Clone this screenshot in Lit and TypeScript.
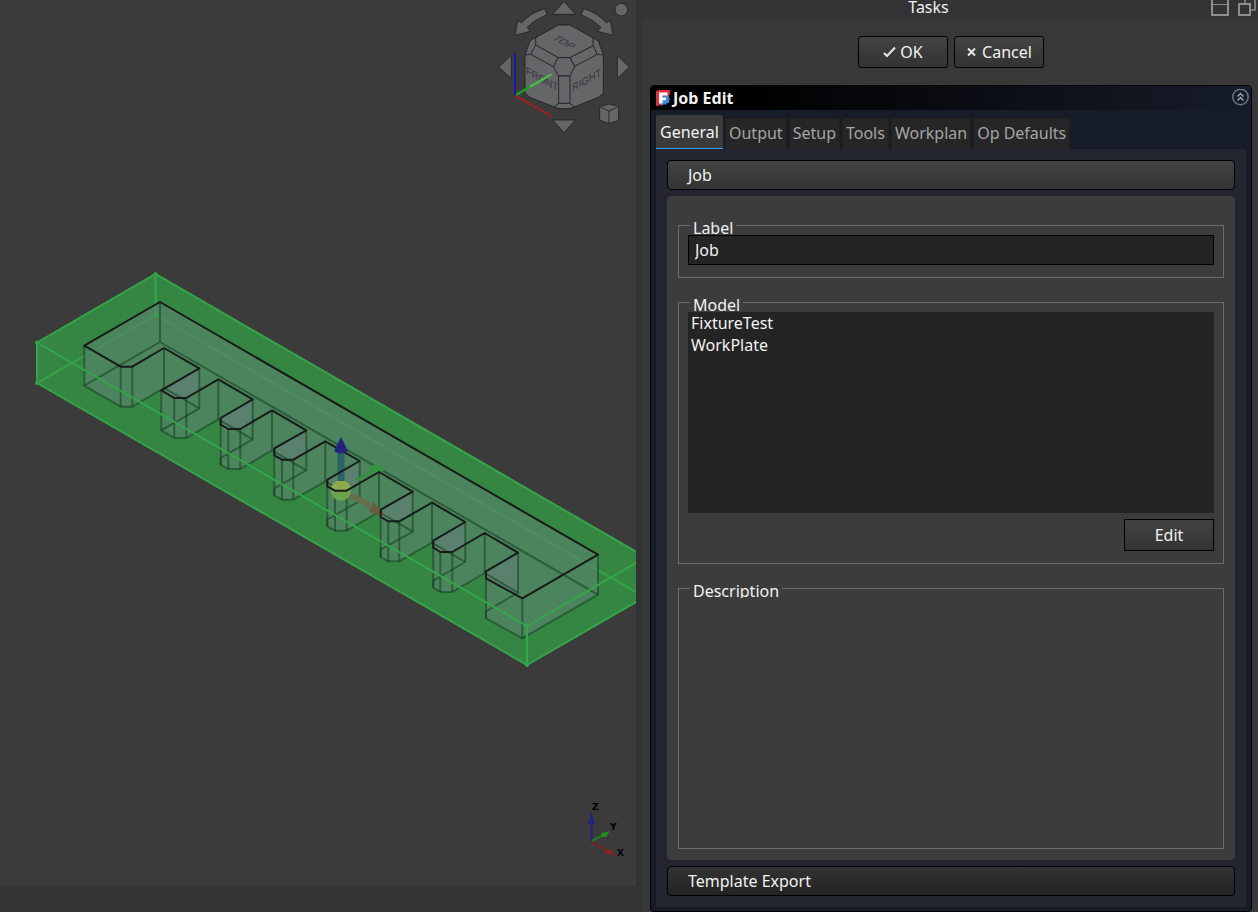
import { LitElement, html, svg, css } from "lit";
import { customElement, state } from "lit/decorators.js";

type Point = [number, number];

const DEPTH = 40;

/* Top outline of the fixture, clockwise from its left corner. */
const outline: Point[] = [
  [84.3, 345.7], [160, 302], [598, 554.7], [522.3, 598.3], [486, 578.3], [486, 571.3],
  [518, 552.7], [484.7, 533],
  [452.3, 552], [440.3, 552], [433.3, 547.7], [433.3, 540.7], [465.3, 522], [432, 502.7],
  [399.3, 521.3], [388.3, 521.3], [380.7, 517], [380.7, 509.7], [412.7, 491.7], [379, 472],
  [346.7, 490.7], [335, 490.7], [327.3, 486.3], [327.3, 479.7], [359.7, 461], [325.3, 441.3],
  [293.3, 459.7], [282, 459.7], [274.3, 455.3], [274.3, 448.3], [306.3, 430.3], [272, 410.3],
  [240.3, 429], [228.3, 429], [220.7, 424.7], [220.7, 418], [252.7, 399.3], [218.3, 379.3],
  [186.3, 398], [174.3, 398], [161.3, 390.3], [199.3, 368.3], [164, 348],
  [132.3, 366.7], [120.7, 366.7],
];

const path = (pts: Point[], dy = 0) =>
  "M" + pts.map(([x, y]) => `${x} ${y + dy}`).join("L") + "Z";

const wall = (i: number) => {
  const [ax, ay] = outline[i];
  const [bx, by] = outline[(i + 1) % outline.length];
  return `M${ax} ${ay}L${bx} ${by}V${by + DEPTH}L${ax} ${ay + DEPTH}Z`;
};

/* Notch walls that are seen from behind through the top face. */
const backWalls = outline
  .map((_, i) => i)
  .filter((i) => {
    const [ax, ay] = outline[i];
    const [bx, by] = outline[(i + 1) % outline.length];
    return i > 3 && bx - ax > 25 && by < ay;
  });

@customElement("model-scene")
export class ModelScene extends LitElement {
  static styles = css`
    :host { display: block; height: 100%; }
    svg { display: block; width: 100%; height: 100%; }
    .body { fill: #5b836f; opacity: 0.6; }
    .behind { fill: #6a7f80; opacity: 0.45; }
    .soft { fill: none; stroke: #123c1d; stroke-opacity: 0.52; stroke-width: 2; stroke-linejoin: round; }
    .edge { fill: none; stroke: #171b19; stroke-width: 2; stroke-linejoin: round; }
    .stock { fill: #368643; }
    .wire { fill: none; stroke: #35a549; stroke-width: 2; stroke-linecap: round; }
    .dot { fill: #35a549; }
  `;

  render() {
    return html`
      <svg viewBox="0 0 636 886" preserveAspectRatio="xMidYMid slice" role="img" aria-label="Fixture inside its stock">
        <defs><clipPath id="top"><path d=${path(outline)} /></clipPath></defs>
        <path class="stock" d="M37 342.500L155.500 274L636 551.500L700 589V566L527 665L37 383Z" />
        <path class="wire" d="M155.500 274V315L37 383M155.500 315L700 629" />
        <g class="body">
          <path d=${path(outline)} />
          <path d=${path(outline, DEPTH)} />
          ${outline.map((_, i) => svg`<path d=${wall(i)} />`)}
        </g>
        <g clip-path="url(#top)">
          ${backWalls.map((i) => svg`<path class="behind" d=${wall(i)} />`)}
        </g>
        <path class="soft" d=${path(outline, DEPTH)} />
        <path class="soft" d=${outline.map(([x, y]) => `M${x} ${y}v${DEPTH}`).join("")} />
        <g>
          <path d="M355 479L370 471L369 466L378 464L385 467L382 473L374 472L357 482Z" fill="#369142" />
          <path d="M350 492L371 503L370 509L348 497Z" fill="#67704a" />
          <path d="M373 502L379 508L385 515L378 515L369 512Z" fill="#665d3a" />
          <circle cx="341" cy="490.500" r="10.200" fill="#6ba54b" />
          <path d="M330.800 490.500A10.200 10.200 0 0 1 351.200 490.500Z" fill="#8daa4d" />
          <rect x="337.500" y="451" width="7" height="30" fill="#2b6266" />
        </g>
        <path class="edge" d=${path(outline)} />
        <path d="M341 437L348 451Q341 456 334 451Z" fill="#22237f" />
        <path
          class="wire"
          d="M37 342.500L155.500 274L700 588.500M37 342.500V383L527 665V626L37 342.500M527 626L700 526M527 665L700 565"
        />
        ${[[37, 342.5], [37, 383], [155.5, 274], [155.5, 315], [527, 626], [527, 665]].map(
          ([x, y]) => svg`<circle class="dot" cx=${x} cy=${y} r="2" />`
        )}
      </svg>
    `;
  }
}

@customElement("nav-cube")
export class NavCube extends LitElement {
  static styles = css`
    :host { display: block; }
    svg { display: block; width: 100%; height: 100%; }
    .face { fill: #656668; stroke: #26272a; stroke-width: 3; stroke-linejoin: round; }
    .name { font: 32px "Liberation Sans", Arial, sans-serif; fill: #34363a; text-anchor: middle; }
  `;

  render() {
    return html`
      <svg viewBox="0 0 438 420" role="img" aria-label="Navigation cube">
        <g class="face">
          <path d="M222 4L256 43H188Z" />
          <path d="M222 398L256 360H188Z" />
          <path d="M26 201L64 166V236Z" />
          <path d="M418 201L382 166V236Z" />
          <circle cx="394" cy="29" r="19" />
          <path d="M164 26L172 44Q135 58 112 82L121 94L75 106L83 62L95 68Q122 38 164 26Z" />
          <path d="M281 26L273 44Q309 58 333 82L322 94L369 106L361 62L349 68Q322 38 281 26Z" />
          <path d="M205 75H240L308 113L325 123L340 165V280L325 292L240 326H205L120 292L105 280V165L120 123L136 113Z" />
          <path d="M205 75H240L308 113L310 137L240 173H205L137 135V113Z" />
          <path d="M137 135L205 173L190 200L122 163Z" />
          <path d="M310 137L240 173L254 199L322 163Z" />
          <path d="M205 173H240L254 199L240 228H206L190 200Z" />
          <path d="M206 228H240V310H206Z" />
          <path d="M193 320L206 310H240L252 320L240 326H205Z" />
          <path d="M122 163L105 165M322 163L340 165" />
          <path d="M329 320L356 312L386 319V361L357 371L329 360Z" />
          <path d="M329 320L357 333L386 319M357 333V371" />
        </g>
        <text class="name" transform="matrix(0.87 0.48 -0.87 0.5 213 132)">TOP</text>
        <text class="name" transform="matrix(0.87 0.48 0 1 156 248)">FRONT</text>
        <text class="name" transform="matrix(0.87 -0.48 0 1 290 251)">RIGHT</text>
        <path d="M77 288L184 348" stroke="#b01919" stroke-width="6" />
        <path d="M75 160V284" stroke="#1919b0" stroke-width="6" />
        <path d="M79 284L130 254" stroke="#19a519" stroke-width="7" />
        <path d="M120 260L185 223" stroke="#4dbb50" stroke-width="7" />
      </svg>
    `;
  }
}

@customElement("axis-cross")
export class AxisCross extends LitElement {
  static styles = css`
    :host { display: block; }
    svg { display: block; width: 100%; height: 100%; }
    text { font: bold 9px "DejaVu Sans", sans-serif; fill: #000; }
  `;

  render() {
    return html`
      <svg viewBox="0 0 50 66" role="img" aria-label="Axis cross">
        <path d="M11.500 21V42" stroke="#22237f" stroke-width="2" />
        <path d="M11.500 12L15 24H8Z" fill="#22237f" />
        <path d="M12 41L23 35" stroke="#227a22" stroke-width="2" />
        <path d="M21 33L30 31L26 37L22 37Z" fill="#228a22" />
        <path d="M12 42L28 51" stroke="#7d2222" stroke-width="2" />
        <path d="M28 48L37 56L24 53Z" fill="#8a2222" />
        <text x="12" y="10">Z</text>
        <text x="30" y="30">Y</text>
        <text x="37" y="56">X</text>
      </svg>
    `;
  }
}

@customElement("app-root")
export class AppRoot extends LitElement {
  static styles = css`
    :host {
      display: grid;
      grid-template-columns: minmax(0, 1fr) clamp(480px, 49%, 616px);
      column-gap: 6px;
      height: 100vh;
      overflow: hidden;
      background: #333;
      color: #f2f2f2;
      font: 16px/22px "Noto Sans", sans-serif;
    }
    *, *::before { box-sizing: border-box; }
    button, input, textarea { font: inherit; color: inherit; margin: 0; }
    ul { list-style: none; margin: 0; padding: 0; }

    .viewport { position: relative; margin-bottom: 26px; background: #3b3b3b; overflow: hidden; }
    .cube { position: absolute; top: 0; right: 0; width: 146px; height: 140px; }
    .axes { position: absolute; right: 6px; bottom: 20px; width: 50px; height: 66px; }

    .dock { display: flex; flex-direction: column; min-width: 0; background: #383838; }
    .title { display: flex; height: 19px; background: #333; line-height: 15px; }
    .title h1 { flex: 1; margin: 0; font: inherit; text-align: center; }
    .tools { display: flex; gap: 9px; width: 47px; margin-left: -4px; }
    .title h1 { padding-left: 4px; }
    .tool { padding: 0; border: 0; background: none; height: 17px; }
    .tool svg { display: block; }
    .tools { margin-left: 0; }
    .dock-body { flex: 1; display: flex; flex-direction: column; min-height: 0; padding: 17px 6px 0 8px; }
    .actions { display: flex; justify-content: center; gap: 6px; margin-bottom: 17px; }
    .btn {
      display: flex; align-items: center; justify-content: center; gap: 4px;
      width: 90px; height: 32px; padding: 0;
      border: 1px solid #000; border-radius: 3px;
      background: linear-gradient(#434343, #333);
    }
    .btn.square { border-radius: 0; align-self: flex-end; }

    .box {
      flex: 1; display: flex; flex-direction: column; min-height: 0;
      border: 1px solid #000; border-radius: 4px; background: #171d28; overflow: hidden;
    }
    .box-head {
      display: flex; align-items: center; gap: 2px; height: 24px; padding: 0 2px 0 5px;
      background: linear-gradient(90deg, #000 15%, #171c2a);
    }
    .box-head h2 { flex: 1; margin: 0; font: bold 16px/22px "Noto Sans", sans-serif; }
    .fold { padding: 0; border: 0; background: none; }
    .fold svg, .logo { display: block; }
    .tabs { display: flex; align-items: flex-end; gap: 2px; padding: 5px 5px 0; height: 39px; }
    .tab {
      height: 31px; padding: 0 3px 2px; border: 1px solid #202020; border-bottom: 0;
      border-radius: 2px 2px 0 0; background: #262626; color: #a5a5a5; white-space: nowrap;
    }
    .tab[aria-selected="true"] {
      height: 34px; padding: 0 4px; border: 0; border-bottom: 1px solid #3d9bf0;
      background: #3b3b3b; color: #f2f2f2;
    }
    .pane {
      flex: 1; display: flex; flex-direction: column; gap: 6px; min-height: 0;
      margin: 0 5px 4px; padding: 11px; background: #232631;
    }
    .section {
      height: 30px; padding: 0 20px; text-align: left; flex: none;
      border: 1px solid #000; border-radius: 4px; background: linear-gradient(#434343, #333);
    }
    .section.closed { background: linear-gradient(#333, #232323); }
    .page {
      flex: 1; display: flex; flex-direction: column; gap: 14px; min-height: 0;
      padding: 19px 11px 11px; border-radius: 4px; background: #3c3c3c;
    }
    fieldset {
      display: flex; flex-direction: column; gap: 6px; min-width: 0;
      margin: 0; padding: 0 9px 12px; border: 1px solid #6c6c6c;
    }
    legend { height: 20px; margin-left: 2px; padding: 0 3px; line-height: 26px; overflow: hidden; }
    .text { width: 100%; height: 30px; padding: 0 6px; border: 1px solid #000; border-radius: 0; background: #242424; outline: 0; }
    .models { height: 201px; background: #242424; padding: 0 3px; }
    .grow { flex: 1; }
    .notes { display: block; width: 100%; height: 100%; padding: 0; border: 0; background: none; resize: none; outline: 0; }
  `;

  @state() private tab = "General";

  private tabs = ["General", "Output", "Setup", "Tools", "Workplan", "Op Defaults"];
  private models = ["FixtureTest", "WorkPlate"];

  render() {
    return html`
      <main class="viewport">
        <model-scene></model-scene>
        <nav-cube class="cube"></nav-cube>
        <axis-cross class="axes"></axis-cross>
      </main>
      <aside class="dock">
        <header class="title">
          <h1>Tasks</h1>
          <div class="tools">
            <button class="tool" aria-label="Collapse">
              <svg width="18" height="17" fill="none" stroke="#8d8d8d" stroke-width="2">
                <path d="M1 -2V15H17V-2" />
                <path d="M1 4.500H17" stroke-width="1" />
              </svg>
            </button>
            <button class="tool" aria-label="Float">
              <svg width="20" height="17" fill="none" stroke="#8d8d8d" stroke-width="2">
                <path d="M7 4V-2M17 -2V10H13" stroke-width="1.500" />
                <path d="M1 4H12V15H1Z" />
              </svg>
            </button>
          </div>
        </header>
        <div class="dock-body">
          <div class="actions">
            <button class="btn">
              <svg width="13" height="12" fill="none" stroke="#e6e6e6" stroke-width="2"><path d="M1 7L4 10L12 1.500" /></svg>
              OK
            </button>
            <button class="btn">
              <svg width="12" height="12" fill="none" stroke="#e6e6e6" stroke-width="2"><path d="M2 2.500L9 9.500M9 2.500L2 9.500" /></svg>
              Cancel
            </button>
          </div>
          <section class="box">
            <header class="box-head">
              <svg class="logo" width="15" height="16" viewBox="0 0 15 16">
                <path d="M0 1L3 0H14V4L6 15L0 16Z" fill="#d8333f" />
                <path d="M11 5L13 6V8L14 9L13 11V13L11 13L10 15L8 14L6 16L4 12L8 6Z" fill="#3b87dc" />
                <path d="M3 2.500H11.500V5.500H6.500V7.500H10V10.300H6.500V13.500H3Z" fill="#fff" />
              </svg>
              <h2>Job Edit</h2>
              <button class="fold" aria-label="Fold">
                <svg width="17" height="18" fill="none" stroke="#70747c" stroke-width="1.500">
                  <circle cx="8.500" cy="8" r="7.700" />
                  <path stroke="#a0a3a8" d="M5.500 7.500L8.500 4.500L11.500 7.500M5.500 11.500L8.500 8.500L11.500 11.500" />
                </svg>
              </button>
            </header>
            <div class="tabs" role="tablist">
              ${this.tabs.map(
                (t) => html`<button
                  class="tab"
                  role="tab"
                  aria-selected=${String(t === this.tab)}
                  @click=${() => (this.tab = t)}
                >${t}</button>`
              )}
            </div>
            <div class="pane" role="tabpanel">
              <button class="section" aria-expanded="true">Job</button>
              <div class="page">
                <fieldset>
                  <legend id="label-name">Label</legend>
                  <input class="text" type="text" aria-labelledby="label-name" .value=${"Job"} />
                </fieldset>
                <fieldset>
                  <legend>Model</legend>
                  <ul class="models">${this.models.map((m) => html`<li>${m}</li>`)}</ul>
                  <button class="btn square">Edit</button>
                </fieldset>
                <fieldset class="grow">
                  <legend id="notes-name">Description</legend>
                  <textarea class="notes" aria-labelledby="notes-name"></textarea>
                </fieldset>
              </div>
              <button class="section closed" aria-expanded="false">Template Export</button>
            </div>
          </section>
        </div>
      </aside>
    `;
  }
}
